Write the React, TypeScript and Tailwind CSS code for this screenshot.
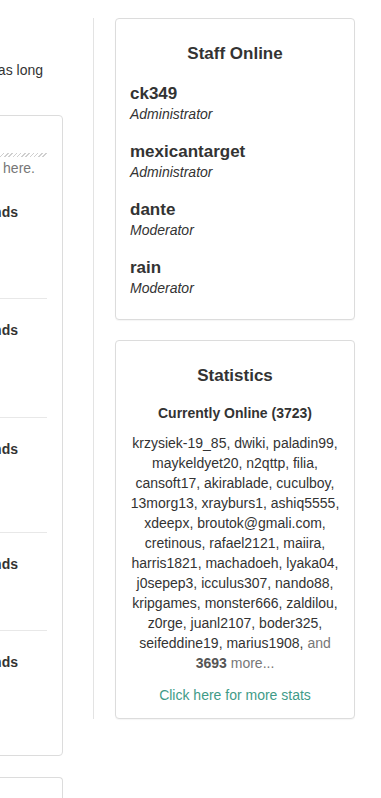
const staff = [
  { name: "ck349", role: "Administrator" },
  { name: "mexicantarget", role: "Administrator" },
  { name: "dante", role: "Moderator" },
  { name: "rain", role: "Moderator" },
];

const online = [
  "krzysiek-19_85",
  "dwiki",
  "paladin99",
  "maykeldyet20",
  "n2qttp",
  "filia",
  "cansoft17",
  "akirablade",
  "cuculboy",
  "13morg13",
  "xrayburs1",
  "ashiq5555",
  "xdeepx",
  "broutok@gmali.com",
  "cretinous",
  "rafael2121",
  "maiira",
  "harris1821",
  "machadoeh",
  "lyaka04",
  "j0sepep3",
  "icculus307",
  "nando88",
  "kripgames",
  "monster666",
  "zaldilou",
  "z0rge",
  "juanl2107",
  "boder325",
  "seifeddine19",
  "marius1908",
];

// left panel rows: height of the row and where its title sits
const threads = [
  { title: "Latest Trends", height: 116, pad: 19 },
  { title: "Hot Brands", height: 119, pad: 21 },
  { title: "New Finds", height: 115, pad: 21 },
  { title: "Best Friends", height: 98, pad: 21 },
  { title: "Old Sounds", height: 124, pad: 21 },
];

function Card({ title, children, className }: { title: string; children: React.ReactNode; className?: string }) {
  return (
    <section
      className={
        "w-[240px] rounded-[4px] border border-[#dcdcdc] bg-white px-[14px] pt-[25px] shadow-[0_1px_1px_rgba(0,0,0,0.04)] " +
        (className ?? "")
      }
    >
      <h3 className="text-center text-[17px] font-bold leading-[20px] text-[#333]">{title}</h3>
      {children}
    </section>
  );
}

export default function App() {
  return (
    <div className="flex min-h-[798px] items-start overflow-hidden bg-white font-['Liberation_Sans',Arial,sans-serif] text-[#333]">
      {/* main column, mostly off-screen to the left */}
      <div className="w-[63px] shrink-0 overflow-hidden">
        <div className="ml-[-337px] w-[400px]">
          <p className="mt-[60px] whitespace-nowrap pr-[20px] text-right text-[14px] leading-[20px]">
            Your account stays active for as long
          </p>

          <div className="mt-[35px] rounded-[4px] border border-[#dcdcdc] pr-[15px]">
            <div className="mt-[37px] h-[4px] bg-[repeating-linear-gradient(135deg,#cfcfcf_0px,#cfcfcf_1px,transparent_1px,transparent_3px)]" />
            <p className="mt-[1px] whitespace-nowrap pr-[12px] text-right text-[14px] leading-[20px] text-[#777]">
              Nothing posted yet, start a topic <span className="text-[#3d7fb8]">.</span> here.
            </p>
            <div className="mt-[5px]">
              {threads.map((t, i) => (
                <div
                  key={t.title}
                  style={{ height: t.height, paddingTop: t.pad }}
                  className={i < threads.length - 1 ? "border-b border-[#e8e8e8]" : ""}
                >
                  <div className="whitespace-nowrap pr-[29px] text-right text-[14px] font-bold leading-[20px] text-[#333]">
                    {t.title}
                  </div>
                </div>
              ))}
            </div>
          </div>

          <div className="mt-[21px] h-[40px] rounded-t-[4px] border border-b-0 border-[#dcdcdc]" />
        </div>
      </div>

      {/* sidebar */}
      <aside className="ml-[30px] mt-[18px] flex flex-col gap-[20px] border-l border-[#e3e3e3] pl-[21px]">
        <Card title="Staff Online" className="pb-[21px]">
          <ul className="mt-[20px] flex flex-col gap-[18px]">
            {staff.map((s) => (
              <li key={s.name}>
                <div className="text-[17px] font-bold leading-[20px]">{s.name}</div>
                <div className="text-[14px] italic leading-[20px]">{s.role}</div>
              </li>
            ))}
          </ul>
        </Card>

        <Card title="Statistics" className="pb-[13px]">
          <h4 className="mt-[17px] text-center text-[14px] font-bold leading-[20px]">Currently Online (3723)</h4>
          <p className="mt-[10px] text-center text-[14px] leading-[20px]">
            {online.join(", ")},{" "}
            <span className="text-[#777]">
              and <b className="text-[#555]">3693</b> more...
            </span>
          </p>
          <a href="#" className="mt-[12px] block text-center text-[14px] leading-[20px] text-[#3f9b88]">
            Click here for more stats
          </a>
        </Card>
      </aside>
    </div>
  );
}
